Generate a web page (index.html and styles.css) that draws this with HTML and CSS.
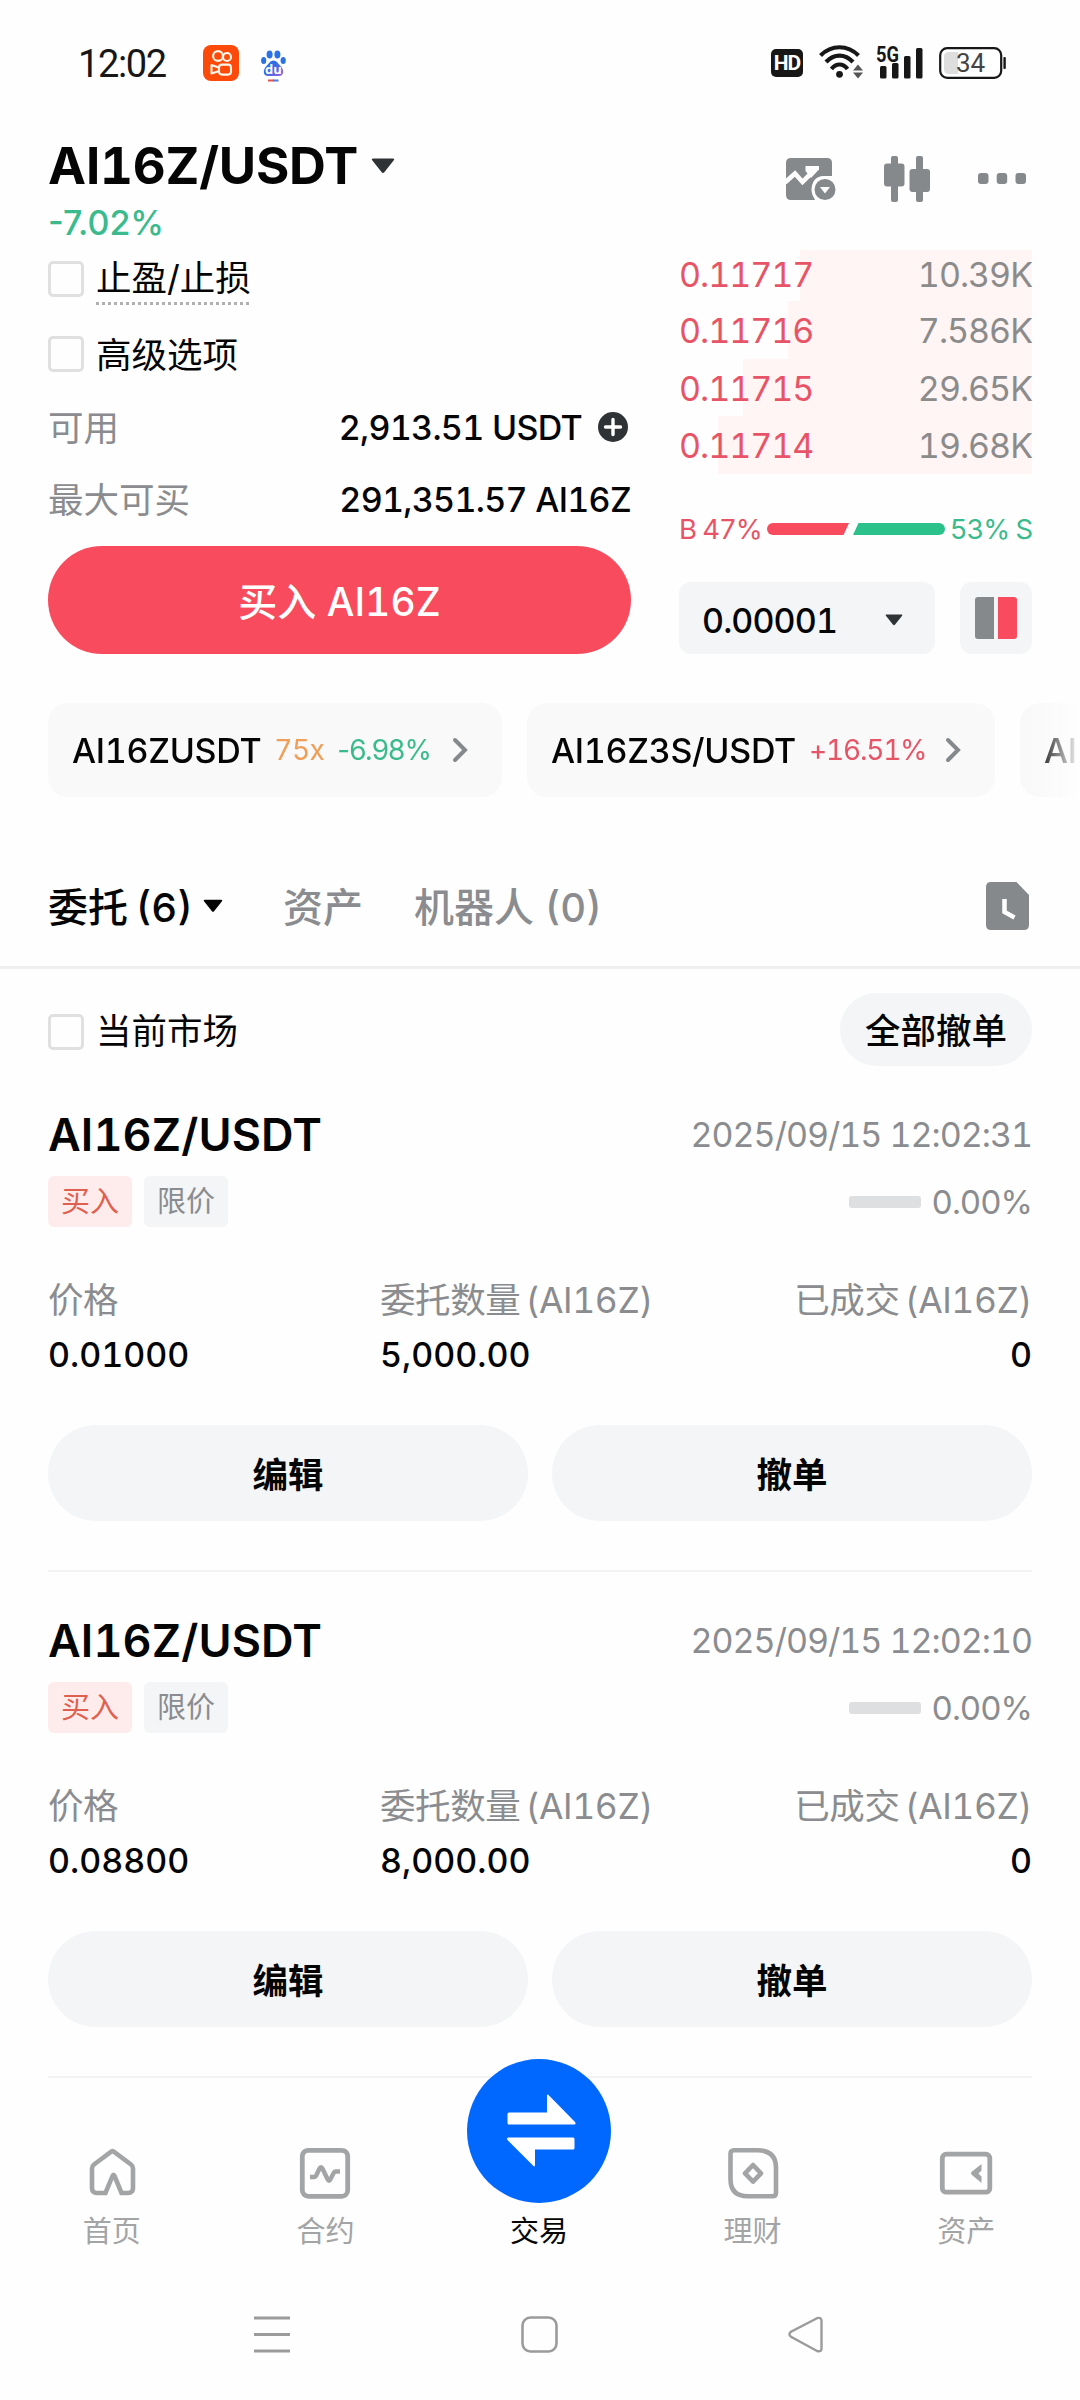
FILE: index.html
```html
<!DOCTYPE html>
<html lang="zh-CN">
<head>
<meta charset="utf-8">
<title>AI16Z/USDT</title>
<link rel="stylesheet" href="styles.css">
</head>
<body>
<div class="app">
  <div class="status">
    <span class="clock">12:02</span>
    <svg class="ks" width="36" height="36" viewBox="0 0 36 36"><rect width="36" height="36" rx="8" fill="#fc4a0a"/><g fill="none" stroke="#fff6ea" stroke-width="2.1"><circle cx="15" cy="11" r="4.9"/><circle cx="24" cy="12" r="4"/><rect x="16" y="19.6" width="12" height="10" rx="3"/><path d="M15.500 22.500 8.500 20v8.600l7-2.400" stroke-linejoin="round"/></g></svg>
    <svg class="baidu" width="25" height="32" viewBox="0 0 25 32"><defs><linearGradient id="bd" x1="0" y1="0" x2="1" y2="1"><stop offset=".4" stop-color="#2f6fe6"/><stop offset="1" stop-color="#9a5fe0"/></linearGradient></defs><g fill="#2b72e6"><ellipse cx="8.600" cy="4.500" rx="3" ry="4"/><ellipse cx="16.400" cy="4.500" rx="3" ry="4"/><ellipse cx="2.700" cy="10.500" rx="2.600" ry="3.600"/><ellipse cx="22.200" cy="10.500" rx="2.600" ry="3.600"/></g><path d="M12.500 10.500c3 0 4.500 3 7 5.500 4 4 3.500 10-1.500 10H7c-5 0-5.500-6-1.500-10 2.500-2.500 4-5.500 7-5.500z" fill="url(#bd)"/><text x="12.500" y="23.500" text-anchor="middle" class="du">du</text><path d="M7 30.500h6" stroke="#e05050" stroke-width="2"/><path d="M12 30.500h5.500" stroke="#4a7ae8" stroke-width="2"/></svg>
    <div class="status-right">
      <span class="hd">HD</span>
      <svg class="wifi" width="46" height="35" viewBox="0 0 46 35"><g fill="none" stroke="#171717" stroke-width="4.200"><path d="M1.500 11.500c11-11 27-11 38 0"/><path d="M7 18c8-8.500 19-8.500 27 0"/><path d="M12.500 25c4.500-6 11.500-6 16 0"/></g><circle cx="20.500" cy="30.300" r="3.400" fill="#171717"/><path d="M34 26.500l5-6 5 6zM34 28.500h10l-5 6z" fill="#555"/></svg>
      <svg class="cell" width="48" height="34" viewBox="0 0 48 34"><text x="0" y="16.500" class="g5" textLength="23" lengthAdjust="spacingAndGlyphs">5G</text><g fill="#171717"><rect x="4" y="21" width="6.500" height="12.500" rx="1.500"/><rect x="16" y="18" width="6.500" height="15.500" rx="1.500"/><rect x="28" y="11" width="6.500" height="22.500" rx="1.500"/><rect x="40" y="3" width="6.500" height="30.500" rx="1.500"/></g></svg>
      <svg class="batt" width="68" height="32" viewBox="0 0 68 32"><rect x="1.200" y="1.200" width="61" height="29.600" rx="7" fill="#fff" stroke="#171717" stroke-width="2.200"/><path d="M10 5h9v22h-9q-5 0-5-5V10q0-5 5-5z" fill="#dedede"/><rect x="64.400" y="10" width="2.400" height="12" rx="1" fill="#171717"/><text x="31.500" y="25" text-anchor="middle" class="pct">34</text></svg>
    </div>
  </div>

  <header class="head">
    <div class="pair">
      <div class="pair-line"><h1>AI16Z/USDT</h1><svg width="24" height="16" viewBox="0 0 24 16"><path d="M2 .5h20q2 0 .8 1.800L13.500 14q-1.500 2-3 0L1.200 2.300Q0 .5 2 .5z" fill="#303336"/></svg></div>
      <div class="change">-7.02%</div>
    </div>
    <div class="tools">
      <svg width="50" height="42" viewBox="0 0 50 42"><path d="M5 0h36q5 0 5 5v13h-7q-13 0-13 13 0 6 3 11H5q-5 0-5-5V5q0-5 5-5z" fill="#85898c"/><path d="M-1 24.500l10-9L16.500 24 28 12.500" fill="none" stroke="#fefefe" stroke-width="4.600"/><path d="M19.500 8H33v3.500l-8 8.500-5.500-7z" fill="#fefefe"/><circle cx="39" cy="31.500" r="13.500" fill="#fefefe"/><circle cx="39" cy="31.500" r="10.500" fill="#85898c"/><path d="M34 29h10l-5 6.500z" fill="#fefefe"/></svg>
      <svg width="46" height="46" viewBox="0 0 46 46" fill="#85898c"><rect x="7" width="7" height="46" rx="2"/><rect y="7.500" width="20.500" height="23" rx="3"/><rect x="32" width="7" height="46" rx="2"/><rect x="25.500" y="13" width="20.500" height="23" rx="3"/></svg>
      <svg width="48" height="11" viewBox="0 0 48 11" fill="#85898c"><rect width="10.500" height="11" rx="3"/><rect x="18.700" width="10.500" height="11" rx="3"/><rect x="37.500" width="10.500" height="11" rx="3"/></svg>
    </div>
  </header>

  <section class="trade">
    <div class="form">
      <div class="opt"><i class="box"></i><span class="dotted">止盈/止损</span></div>
      <div class="opt second"><i class="box"></i><span>高级选项</span></div>
      <div class="info"><span class="lbl">可用</span><span class="amt avail">2,913.51 USDT</span><svg class="plus" width="30" height="30" viewBox="0 0 30 30"><circle cx="15" cy="15" r="15" fill="#303336"/><path d="M15 7.500v15M7.500 15h15" stroke="#fff" stroke-width="3.400" stroke-linecap="round"/></svg></div>
      <div class="info"><span class="lbl">最大可买</span><span class="amt maxbuy">291,351.57 AI16Z</span></div>
      <button class="buy">买入 AI16Z</button>
    </div>
    <div class="book">
      <div class="depth">
        <div class="lvl first"><i style="width:232px"></i><b>0.11717</b><span>10.39K</span></div>
        <div class="lvl"><i style="width:244px"></i><b>0.11716</b><span>7.586K</span></div>
        <div class="lvl"><i style="width:289px"></i><b>0.11715</b><span>29.65K</span></div>
        <div class="lvl"><i style="width:314px"></i><b>0.11714</b><span>19.68K</span></div>
      </div>
      <div class="ratio"><span class="red">B 47%</span><svg width="178" height="12" viewBox="0 0 178 12"><path d="M6 0h76l-5.500 12H6A6 6 0 0 1 6 0z" fill="#f84c5e"/><path d="M91.500 0H172a6 6 0 0 1 0 12H86z" fill="#2bc18a"/></svg><span class="green">53% S</span></div>
      <div class="pickers">
        <div class="select"><span>0.00001</span><svg width="18" height="12" viewBox="0 0 24 16"><path d="M2 .5h20q2 0 .8 1.800L13.500 14q-1.500 2-3 0L1.200 2.300Q0 .5 2 .5z" fill="#303336"/></svg></div>
        <div class="side"><i class="grey"></i><i class="rd"></i></div>
      </div>
    </div>
  </section>

  <div class="chips">
    <div class="chip c1"><span class="sym">AI16ZUSDT</span><span class="lev">75x</span><span class="pc minus green">-6.98%</span><svg width="16" height="26" viewBox="0 0 16 26"><path d="M3 3l10 10L3 23" fill="none" stroke="#85898c" stroke-width="4" stroke-linecap="round"/></svg></div>
    <div class="chip c2"><span class="sym">AI16Z3S/USDT</span><span class="pc red">+16.51%</span><svg width="16" height="26" viewBox="0 0 16 26"><path d="M3 3l10 10L3 23" fill="none" stroke="#85898c" stroke-width="4" stroke-linecap="round"/></svg></div>
    <div class="chip c3"><span class="sym">AI</span></div>
  </div>

  <nav class="tabs">
    <span class="tab on">委托 (6)</span><svg class="tri" width="20" height="14" viewBox="0 0 24 16"><path d="M2 .5h20q2 0 .8 1.800L13.500 14q-1.500 2-3 0L1.200 2.300Q0 .5 2 .5z" fill="#050505"/></svg>
    <span class="tab t2">资产</span>
    <span class="tab t3">机器人 (0)</span>
    <svg class="hist" width="43" height="48" viewBox="0 0 43 48"><path d="M5 0h25.500L43 13v30q0 5-5 5H5q-5 0-5-5V5q0-5 5-5z" fill="#85898c"/><path d="M18.500 17v13l10 5.500" fill="none" stroke="#fff" stroke-width="4.500"/></svg>
  </nav>

  <div class="filter"><i class="box"></i><span>当前市场</span><button>全部撤单</button></div>

  <article class="order first-order">
    <div class="row"><h2>AI16Z/USDT</h2><time>2025/09/15 12:02:31</time></div>
    <div class="row tags"><span class="tag buyt">买入</span><span class="tag lim">限价</span><i class="prog"></i><span class="zero">0.00%</span></div>
    <div class="cols labels"><span>价格</span><span>委托数量 (AI16Z)</span><span>已成交 (AI16Z)</span></div>
    <div class="cols vals"><span>0.01000</span><span>5,000.00</span><span>0</span></div>
    <div class="acts"><button>编辑</button><button>撤单</button></div>
  </article>
  <article class="order">
    <div class="row"><h2>AI16Z/USDT</h2><time>2025/09/15 12:02:10</time></div>
    <div class="row tags"><span class="tag buyt">买入</span><span class="tag lim">限价</span><i class="prog"></i><span class="zero">0.00%</span></div>
    <div class="cols labels"><span>价格</span><span>委托数量 (AI16Z)</span><span>已成交 (AI16Z)</span></div>
    <div class="cols vals"><span>0.08800</span><span>8,000.00</span><span>0</span></div>
    <div class="acts"><button>编辑</button><button>撤单</button></div>
  </article>

  <nav class="bottom">
    <a><svg width="54" height="54" viewBox="0 0 54 54"><path d="M26.500 5.500q1-.6 2 0L46 18.500q2 1.500 2 4V42q0 5-5 5h-6.500L29.500 30q-1-2.500-2 0L20.500 47H12q-5 0-5-5V22.500q0-2.500 2-4z" fill="none" stroke="#a3a4a5" stroke-width="4.600"/></svg><span>首页</span></a>
    <a><svg width="54" height="54" viewBox="0 0 54 54"><rect x="4.300" y="4.300" width="45.400" height="46" rx="6" fill="none" stroke="#a3a4a5" stroke-width="4.800"/><path d="M12 31h4.500q1 0 1.600-1.200l3.200-6.800q1.700-3.500 3.400 0l5 10.500q1.300 2.500 2.600 0l3.500-6.800q.6-1.200 2-1.200H42" fill="none" stroke="#a3a4a5" stroke-width="4.500"/></svg><span>合约</span></a>
    <a class="active"><svg width="144" height="144" viewBox="0 0 144 144"><circle cx="72" cy="72" r="72" fill="#0068ff"/><path d="M42 53.500h38V37q0-2.500 2-.5l26 26.500q1.500 2.500-1 2.500H42q-1.500 0-1.500-1.500v-9q0-1.500 1.500-1.500zM106 78.500H42q-3 0-1.500 2.500L66 106.500q2 2 2-.5V90.500h38q1.500 0 1.500-1.500v-9q0-1.500-1.500-1.500z" fill="#fff"/></svg><span>交易</span></a>
    <a><svg width="54" height="54" viewBox="0 0 54 54"><path d="M8 4.300h24Q50 4.300 50 22v25q0 3.300-3.500 3.300H22Q4.500 50.300 4.500 33V7.800q0-3.500 3.500-3.500z" fill="none" stroke="#a3a4a5" stroke-width="4.600"/><path d="M27 19l8 8.300-8 8.300-8-8.300z" fill="none" stroke="#a3a4a5" stroke-width="4.600" stroke-linejoin="round"/></svg><span>理财</span></a>
    <a><svg width="54" height="54" viewBox="0 0 54 54"><rect x="3.300" y="8.200" width="47.500" height="38" rx="4" fill="none" stroke="#a3a4a5" stroke-width="4.800"/><path d="M42.500 18L33 25.500q-2 1.800 0 3.600L42.500 37v-6.500l-3-3 3-3z" fill="#a3a4a5"/></svg><span>资产</span></a>
  </nav>

  <div class="sys">
    <svg width="36" height="37" viewBox="0 0 36 37"><path d="M0 2h36M0 18.500h36M0 35h36" stroke="#9b9b9b" stroke-width="3"/></svg>
    <svg width="37" height="37" viewBox="0 0 37 37"><rect x="1.500" y="1.500" width="34" height="34" rx="8" fill="none" stroke="#9b9b9b" stroke-width="2.600"/></svg>
    <svg width="36" height="37" viewBox="0 0 36 37"><path d="M29 2.200L3 15.800q-3.200 2.500 0 5L29 35q4.500 1.200 4.500-2.500v-27.500q0-4-4.500-2.800z" fill="none" stroke="#9b9b9b" stroke-width="2.400"/></svg>
  </div>
</div>
</body>
</html>
```
FILE: styles.css
```css
* { box-sizing: border-box; margin: 0; padding: 0; }
html, body { width: 1080px; height: 2400px; overflow: hidden; }
body {
  background: #fefefe;
  color: #050505;
  font-family: Inter, "Noto Sans CJK SC", sans-serif;
  font-feature-settings: "tnum" 1;
}
svg { display: block; flex: none; overflow: visible; }
button { border: 0; font-family: inherit; color: inherit; font-feature-settings: inherit; }
i { font-style: normal; display: block; flex: none; }
span, h1, h2, time { white-space: nowrap; }
.red { color: #e85467; }
.green { color: #3bbb8d; }

.app { width: 1080px; height: 2400px; display: flex; flex-direction: column; overflow: hidden; }
.app > * { flex: none; }

.status { height: 126px; padding: 0 73px 0 78px; display: flex; align-items: center; color: #171717; }
.clock { width: 125px; font: 400 38px/50px Roboto, sans-serif; letter-spacing: -1.4px; padding-top: 2px; }
.ks { margin-right: 22px; }
.baidu { margin-top: 5px; }
.du { font: 700 13px "Open Sans", sans-serif; fill: #fff; }
.status-right { margin-left: auto; display: flex; align-items: center; }
.hd { width: 32px; height: 28px; margin-right: 16px; border-radius: 5px; background: #171717; color: #fff; font: 700 21px/28px Roboto, sans-serif; letter-spacing: -1px; text-align: center; }
.wifi { margin-right: 11px; margin-top: -4px; }
.cell { margin-right: 15px; margin-top: -3px; }
.g5 { font: 700 22px Roboto, sans-serif; fill: #171717; }
.pct { font: 400 26px Roboto, sans-serif; fill: #444; }

.head { height: 124px; padding: 0 54px 0 48px; display: flex; justify-content: space-between; }
.pair-line { display: flex; align-items: center; gap: 13px; height: 80px; }
h1 { font-size: 51px; font-weight: 700; line-height: 80px; letter-spacing: -0.2px; }
.change { height: 34px; line-height: 33px; font-size: 34px; font-weight: 500; color: #3bbb8d; font-feature-settings: "tnum" 0; }
.tools { display: flex; align-items: center; gap: 48px; height: 105px; }

.trade { height: 428px; padding: 0 48px; display: flex; justify-content: space-between; }
.form { width: 583px; display: flex; flex-direction: column; }
.opt { display: flex; gap: 12px; height: 57px; padding-top: 11px; font-size: 35.500px; line-height: 36px; }
.opt.second { padding-top: 29px; height: 92px; }
.opt.second span { padding-top: 2px; }
.box { width: 36px; height: 36px; border: 3px solid #e0e0e0; border-radius: 5px; }
.dotted { height: 44px; background: repeating-linear-gradient(90deg, #b0b0b0 0 3px, transparent 3px 6px) bottom / 100% 3px no-repeat; }
.info { display: flex; align-items: center; height: 72px; font-size: 34px; }
.opt.second + .info { margin-top: -8px; }
.lbl { margin-right: auto; margin-top: -3px; color: #8a8c8f; font-size: 35.500px; }
.avail { margin-right: 16px; }
.plus { margin-right: 3px; }
.amt { font-weight: 500; letter-spacing: -0.7px; }
.buy { margin-top: 11px; width: 583px; height: 108px; padding-bottom: 2px; border-radius: 54px; background: #f84c5e; color: #fff; font-size: 39px; font-weight: 500; }

.book { width: 353px; }
.depth { height: 224px; }
.lvl { position: relative; display: flex; justify-content: space-between; height: 57.600px; font-size: 34px; line-height: 59px; letter-spacing: -1px; }
.lvl.first { height: 51px; line-height: 49px; }
.lvl i { position: absolute; right: 0; top: 0; bottom: 0; background: #fef5f4; z-index: -1; }
.lvl b { font-weight: 400; color: #e85467; }
.lvl span { color: #8b8b8c; }
.ratio { display: flex; align-items: center; justify-content: space-between; margin-top: 37px; height: 36px; font-size: 27.500px; letter-spacing: -1.100px; }
.pickers { display: flex; justify-content: space-between; margin-top: 35px; }
.select { width: 256px; height: 72px; padding: 4px 32px 0 23px; display: flex; align-items: center; justify-content: space-between; background: #f3f5f6; border-radius: 12px; font-size: 34px; font-weight: 500; letter-spacing: -0.9px; }
.side { width: 72px; height: 72px; display: flex; align-items: center; justify-content: center; gap: 4px; background: #f3f5f6; border-radius: 12px; }
.side i { width: 19px; height: 42px; }
.side .grey { background: #85898c; border-radius: 3px 0 0 3px; }
.side .rd { background: #f84c5e; border-radius: 0 3px 3px 0; }

.chips { margin-top: 25px; height: 94px; padding-left: 48px; display: flex; gap: 25px; overflow: hidden; -webkit-mask-image: linear-gradient(90deg, #000 1035px, transparent 1080px); mask-image: linear-gradient(90deg, #000 1035px, transparent 1080px); }
.chip { flex: none; height: 94px; padding: 0 34px 0 24px; display: flex; align-items: center; background: #f9f9f9; border-radius: 20px; }
.chip svg { margin-left: auto; }
.c1 { width: 454px; }
.c2 { width: 468px; }
.c3 { width: 120px; }
.sym { font-size: 34px; font-weight: 500; margin-right: 13px; letter-spacing: -0.3px; }
.lev { font-size: 28px; color: #ef9f58; margin-right: 13px; letter-spacing: -0.6px; }
.pc { font-size: 28px; letter-spacing: -1.200px; }
.minus { font-feature-settings: "tnum" 0; letter-spacing: -0.9px; }

.tabs { margin-top: 48px; height: 124px; border-bottom: 3px solid #efefef; padding: 0 51px 0 48px; display: flex; align-items: center; }
.tab { font-size: 40px; color: #8a8c8f; font-weight: 500; margin-top: -2px; }
.tab.on { color: #050505; word-spacing: -3px; }
.tri { margin: 0 60px 0 10px; }
.t2 { margin-right: 51px; }
.hist { margin-left: auto; }

.filter { height: 125px; padding: 0 48px; display: flex; align-items: center; font-size: 35.500px; }
.filter .box { margin-right: 12px; }
.filter span { margin-top: -6px; }
.filter button { margin-left: auto; margin-top: -4px; width: 192px; height: 73px; padding-bottom: 3px; border-radius: 37px; background: #f3f5f6; font-size: 35.500px; font-weight: 500; }

.order { margin: 0 48px; height: 506px; padding-top: 36px; border-bottom: 2px solid #f3f3f3; }
.first-order { height: 478px; padding-top: 8px; }
.row { display: flex; align-items: center; justify-content: space-between; height: 64px; }
h2 { font-size: 45px; font-weight: 600; letter-spacing: 0.1px; }
time { font-size: 34px; color: #8a8c8f; letter-spacing: -1px; }
.tags { justify-content: flex-start; height: 51px; margin-top: 10px; }
.tag { width: 84px; height: 51px; border-radius: 6px; line-height: 51px; text-align: center; font-size: 29px; margin-right: 12px; }
.buyt { background: #feecec; color: #e0604f; }
.lim { background: #f3f5f6; color: #8a8c8f; }
.prog { width: 72px; height: 12px; margin: 0 11px 0 auto; border-radius: 3px; background: #dedfe0; }
.zero { font-size: 33px; color: #8a8c8f; letter-spacing: -1px; }
.cols { display: grid; grid-template-columns: 332px 1fr auto; height: 55px; line-height: 55px; }
.cols span:last-child { text-align: right; }
.labels { margin-top: 46px; font-size: 35.500px; color: #8a8c8f; letter-spacing: -0.4px; word-spacing: -4px; }
.vals { margin-top: -1px; font-size: 34px; font-weight: 500; }
.acts { display: flex; gap: 24px; margin-top: 43px; }
.acts button { width: 480px; height: 96px; padding-bottom: 2px; border-radius: 48px; background: #f3f5f6; font-size: 35.500px; font-weight: 700; }

.bottom { position: relative; height: 206px; margin-top: -19px; padding: 0 7px 0 5px; display: grid; grid-template-columns: repeat(5, 1fr); }
.bottom a { display: flex; flex-direction: column; align-items: center; padding-top: 87px; color: #a3a4a5; }
.bottom a span { font-size: 29px; line-height: 40px; margin-top: 12px; }
.bottom a.active { padding-top: 0; color: #050505; }
.bottom a.active span { margin-top: 9px; }

.sys { height: 100px; margin-top: 51px; padding: 0 256px 0 254px; display: flex; justify-content: space-between; }
```
